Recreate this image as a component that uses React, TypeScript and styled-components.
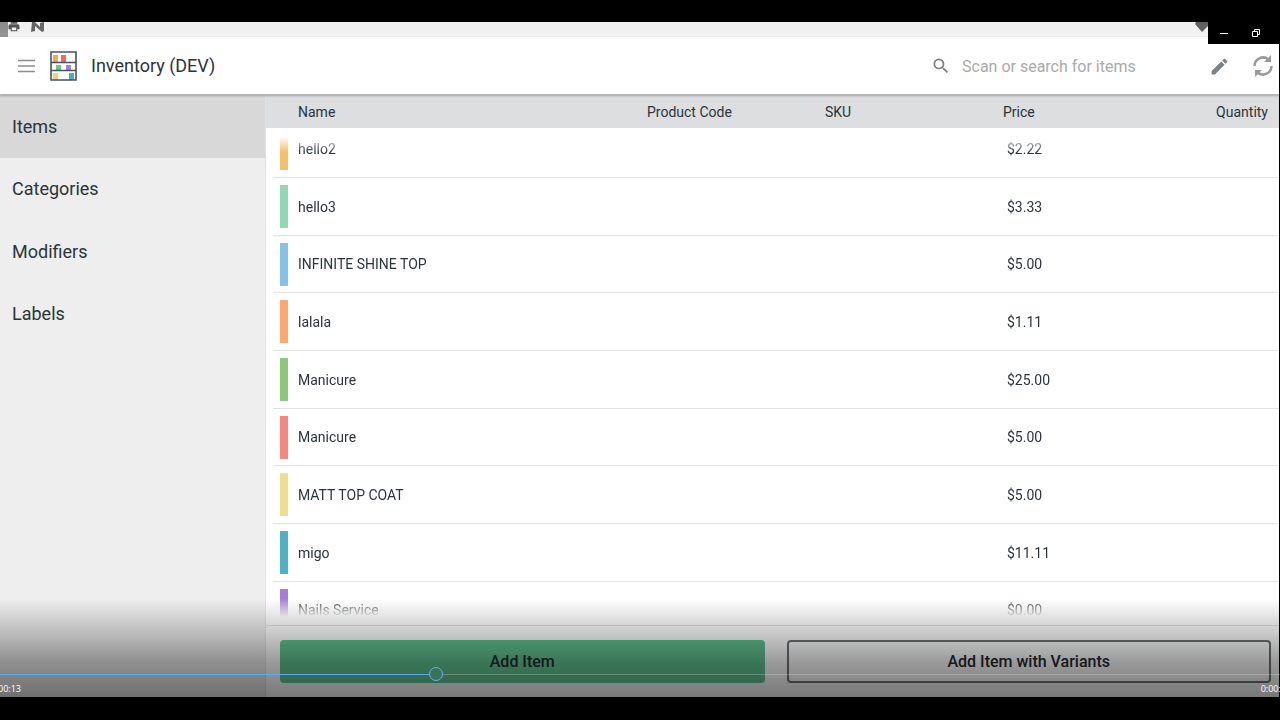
import React, { useState } from "react";
import styled, { createGlobalStyle } from "styled-components";
import { MdEdit, MdSearch } from "react-icons/md";

const GlobalStyle = createGlobalStyle`
  * { box-sizing: border-box; }
  body { margin: 0; background: #000; font-family: Roboto, "Liberation Sans", sans-serif; color: #2b3439; }
  button, input { font: inherit; color: inherit; }
`;

const Player = styled.div`
  height: 100vh;
  padding: 22px 0 23px;
  background: #000;
  overflow: hidden;
  position: relative;
`;

const Video = styled.div`
  height: 100%;
  margin-right: 1px;
  display: flex;
  flex-direction: column;
  background: #fff;
  position: relative;
`;

const StatusBar = styled.div`
  height: 15px;
  flex: none;
  display: flex;
  align-items: flex-start;
  gap: 11px;
  padding-left: 8px;
  background: #f1f1f1;
  overflow: hidden;
  svg { display: block; flex: none; }
`;

const Signal = styled.svg`
  margin-left: auto;
  margin-right: 70px;
`;

const CornerShade = styled.div`
  position: absolute;
  top: 0;
  left: 0;
  width: 8px;
  height: 22px;
  background: linear-gradient(#8a8a8a, #999);
`;

const AppBar = styled.header`
  height: 58px;
  flex: none;
  display: flex;
  align-items: center;
  padding: 1px 6px 0 18px;
  border-bottom: 1px solid #b4b4b4;
  background: #fff;
  box-shadow: 0 1px 2px rgba(0, 0, 0, 0.25);
  position: relative;
`;

const IconButton = styled.button`
  display: flex;
  padding: 0;
  border: 0;
  background: none;
  color: #7d8183;
`;

const Logo = styled.svg`
  margin: 0 14px 0 15px;
`;

const Title = styled.h1`
  margin: 0;
  font-size: 18px;
  line-height: 24px;
  font-weight: 400;
`;

const Search = styled.label`
  margin-left: auto;
  display: flex;
  align-items: center;
  gap: 11px;
  color: #7d7d7d;
`;

const SearchInput = styled.input`
  width: 247px;
  height: 24px;
  padding: 0;
  border: 0;
  outline: 0;
  background: none;
  font-size: 16px;
  &::placeholder { color: #a9a9a9; opacity: 1; }
`;

const Actions = styled.div`
  display: flex;
  align-items: center;
  gap: 23px;
`;

const Body = styled.div`
  flex: 1;
  min-height: 0;
  display: flex;
`;

const Sidebar = styled.nav`
  width: 265px;
  flex: none;
  background: #eee;
`;

const NavList = styled.div`
  height: 250px;
  display: grid;
  grid-template-rows: repeat(4, 1fr);
`;

const NavLink = styled.a<{ $active?: boolean }>`
  display: flex;
  align-items: center;
  padding-left: 12px;
  font-size: 18px;
  color: inherit;
  text-decoration: none;
  background: ${(p) => (p.$active ? "#d8d8d8" : "transparent")};
`;

const Main = styled.main`
  flex: 1;
  min-width: 0;
  display: flex;
  flex-direction: column;
  border-left: 1px solid #e2e2e2;
`;

const Table = styled.table`
  flex: 1;
  min-height: 0;
  display: flex;
  flex-direction: column;
  font-size: 14px;
  line-height: 20px;
`;

const columns = "18px 349fr 178fr 178fr 137fr 128fr";

const HeadRow = styled.tr`
  height: 33px;
  display: grid;
  grid-template-columns: ${columns};
  align-items: center;
  padding: 0 11px 0 14px;
  background: #dcdee0;
`;

const HeadCell = styled.th<{ $start?: boolean; $right?: boolean }>`
  padding: 0;
  font-weight: 400;
  text-align: ${(p) => (p.$right ? "right" : "left")};
  ${(p) => p.$start && "grid-column: 2;"}
`;

/* The list is scrolled a little, so the first row is partly out of view. */
const Viewport = styled.tbody`
  flex: 1;
  min-height: 0;
  overflow: hidden;
  display: grid;
  grid-template-rows: 50px 58px 57px repeat(2, 58px 58px 57px);
  align-content: start;
  mask-image: linear-gradient(transparent 8px, #000 24px, #000 calc(100% - 26px), transparent calc(100% - 8px));
  > :first-child { height: 58px; align-self: end; }
`;

const Row = styled.tr`
  display: grid;
  grid-template-columns: ${columns};
  align-items: center;
  margin-left: 7px;
  padding: 0 11px 0 7px;
  border-bottom: 1px solid #e2e2e2;
`;

const Cell = styled.td<{ $indent?: boolean }>`
  padding: 0 0 0 ${(p) => (p.$indent ? 4 : 0)}px;
`;

const Swatch = styled.span<{ $color: string }>`
  display: block;
  width: 8px;
  height: 43px;
  background: ${(p) => p.$color};
`;

const Footer = styled.div`
  height: 72px;
  flex: none;
  display: flex;
  gap: 22px;
  padding: 14px 8px 0 14px;
  border-top: 1px solid #e0e0e0;
`;

const Button = styled.button<{ $primary?: boolean }>`
  flex: 1;
  height: 43px;
  padding: 0;
  border-radius: 4px;
  border: 2px solid ${(p) => (p.$primary ? "#62c493" : "#6d7478")};
  background: ${(p) => (p.$primary ? "#62c493" : "#fff")};
  font-size: 16px;
  font-weight: 500;
  color: #1f2a30;
`;

const Controls = styled.div`
  position: absolute;
  left: 0;
  right: 0;
  bottom: 23px;
  height: 98px;
  display: flex;
  flex-direction: column;
  justify-content: flex-end;
  background: linear-gradient(rgba(0, 0, 0, 0), rgba(0, 0, 0, 0.4) 65%, rgba(0, 0, 0, 0.53));
`;

const Seek = styled.input`
  appearance: none;
  display: block;
  width: 100%;
  height: 14px;
  margin: 0;
  background: linear-gradient(90deg, #5aa9ee 34%, rgba(255, 255, 255, 0.22) 34%) center / 100% 1px no-repeat;
  &::-webkit-slider-thumb {
    appearance: none;
    width: 14px;
    height: 14px;
    border: 1px solid #62b2f5;
    border-radius: 50%;
    background: #3c7258;
  }
`;

const Times = styled.div`
  height: 16px;
  display: flex;
  justify-content: space-between;
  margin: 0 -6px 0 -2px;
  font-family: "Open Sans", sans-serif;
  font-size: 9px;
  line-height: 16px;
  color: #fff;
`;

const WindowControls = styled.div`
  position: absolute;
  top: 22px;
  right: 0;
  width: 72px;
  height: 22px;
  display: flex;
  background: #000;
`;

const WindowButton = styled.button`
  width: 32px;
  height: 22px;
  padding: 0;
  border: 0;
  display: flex;
  align-items: center;
  justify-content: center;
  background: none;
  color: #fff;
`;

const nav = ["Items", "Categories", "Modifiers", "Labels"];

const items = [
  { name: "hello2", price: "$2.22", color: "#f5c06c" },
  { name: "hello3", price: "$3.33", color: "#91d7b5" },
  { name: "INFINITE SHINE TOP", price: "$5.00", color: "#86c1e8" },
  { name: "lalala", price: "$1.11", color: "#fba96d" },
  { name: "Manicure", price: "$25.00", color: "#8dc77b" },
  { name: "Manicure", price: "$5.00", color: "#f6877f" },
  { name: "MATT TOP COAT", price: "$5.00", color: "#f2dd8c" },
  { name: "migo", price: "$11.11", color: "#4db3c4" },
  { name: "Nails Service", price: "$0.00", color: "#a07fd6" },
];

export default function App() {
  const [query, setQuery] = useState("");
  return (
    <Player>
      <GlobalStyle />
      <Video>
        <StatusBar>
          <svg width="12" height="10" viewBox="1 5 22 18" aria-hidden="true">
            <path d="M19 9H5c-1.700 0-3 1.300-3 3v6h4v4h12v-4h4v-6c0-1.700-1.300-3-3-3zm-3 11H8v-5h8zM6 5h12v3H6z" fill="#555" />
          </svg>
          <svg width="13" height="10" viewBox="0 0 13 10" aria-hidden="true">
            <path d="M0 10L1 0h3l5 5V1l4-1v9l-2 1L4 4v5z" fill="#666" />
          </svg>
          <Signal width="14" height="10" viewBox="0 0 14 10" aria-hidden="true">
            <path d="M1 0h13v3L7 10 0 2z" fill="#606060" />
          </Signal>
        </StatusBar>
        <CornerShade />
        <AppBar>
          <IconButton aria-label="Menu">
            <svg width="17" height="14" viewBox="0 0 17 14">
              <path d="M0 1.500h17M0 7h17M0 12.500h17" stroke="#8c8c8c" strokeWidth="1.500" />
            </svg>
          </IconButton>
          <Logo width="27" height="30" viewBox="0 0 27 30" aria-hidden="true">
            <path d="M3 4h5v7H3z" fill="#f5a45e" />
            <path d="M11 4h5v7h-5z" fill="#f0695f" />
            <path d="M6 14h5v5H6z" fill="#63c598" />
            <path d="M16 14h5v5h-5z" fill="#a07fd6" />
            <path d="M3 22h5v7H3z" fill="#f0d27c" />
            <path d="M19 22h5v7h-5z" fill="#42b0c4" />
            <path d="M1 1h25v28H1zM1 11.500h25M1 19.500h25" fill="none" stroke="#4a5257" strokeWidth="1.600" />
          </Logo>
          <Title>Inventory (DEV)</Title>
          <Search>
            <MdSearch size={20} aria-hidden="true" />
            <SearchInput
              aria-label="Search items"
              placeholder="Scan or search for items"
              value={query}
              onChange={(e) => setQuery(e.target.value)}
            />
          </Search>
          <Actions>
            <IconButton aria-label="Edit">
              <MdEdit size={21} />
            </IconButton>
            <IconButton aria-label="Refresh">
              <svg width="20" height="22" viewBox="0 0 20 22">
                <g fill="none" stroke="#999" strokeWidth="2.500">
                  <path d="M1.500 11A8.500 8.500 0 0 1 15.500 4.500M18.500 11A8.500 8.500 0 0 1 4.500 17.500" />
                </g>
                <path d="M18 0v7h-7zM2 22v-7h7z" fill="#999" />
              </svg>
            </IconButton>
          </Actions>
        </AppBar>
        <Body>
          <Sidebar>
            <NavList>
              {nav.map((label, i) => (
                <NavLink key={label} href="#" $active={i === 0}>
                  {label}
                </NavLink>
              ))}
            </NavList>
          </Sidebar>
          <Main>
            <Table>
              <thead>
                <HeadRow>
                  <HeadCell $start>Name</HeadCell>
                  <HeadCell>Product Code</HeadCell>
                  <HeadCell>SKU</HeadCell>
                  <HeadCell>Price</HeadCell>
                  <HeadCell $right>Quantity</HeadCell>
                </HeadRow>
              </thead>
              <Viewport>
                {items.map((item, i) => (
                  <Row key={i}>
                    <Cell>
                      <Swatch $color={item.color} />
                    </Cell>
                    <Cell>{item.name}</Cell>
                    <Cell />
                    <Cell />
                    <Cell $indent>{item.price}</Cell>
                    <Cell />
                  </Row>
                ))}
              </Viewport>
            </Table>
            <Footer>
              <Button $primary>Add Item</Button>
              <Button>Add Item with Variants</Button>
            </Footer>
          </Main>
        </Body>
      </Video>
      <Controls>
        <Seek type="range" aria-label="Seek" min={0} max={1000} defaultValue={339} />
        <Times>
          <span>00:13</span>
          <span>0:00:2</span>
        </Times>
      </Controls>
      <WindowControls>
        <WindowButton aria-label="Minimize">
          <svg width="8" height="8" viewBox="0 0 8 8">
            <path d="M0 4.500h8" stroke="currentColor" />
          </svg>
        </WindowButton>
        <WindowButton aria-label="Restore">
          <svg width="8" height="8" viewBox="0 0 8 8" fill="none" stroke="currentColor">
            <path d="M.5 2.500h5v5h-5zM2.500 2.500v-2h5v5h-2" />
          </svg>
        </WindowButton>
      </WindowControls>
    </Player>
  );
}
